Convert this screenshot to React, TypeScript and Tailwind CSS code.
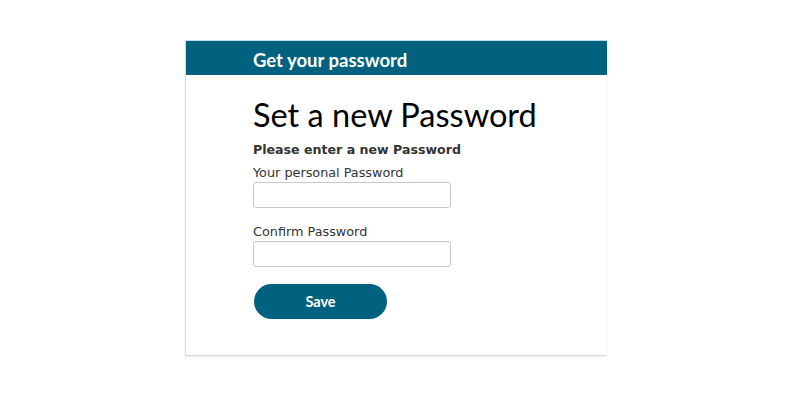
export default function App() {
  return (
    <div className="min-h-[400px] w-[800px] bg-white pl-[185px] pt-[40px] font-['DejaVu_Sans',Verdana,sans-serif]">
      <div className="w-[422px] border-l border-b border-[#d8d8d8] bg-white shadow-[0_1px_2px_rgba(0,0,0,0.08)]">
        {/* Header */}
        <div className="flex h-[35px] items-center border-t border-[#bfe0ea] bg-[#00627f] pl-[67px] pt-[5px]">
          <h2 className="font-['Lato',sans-serif] text-[18.5px] font-bold text-white">Get your password</h2>
        </div>

        {/* Form */}
        <div className="pl-[67px] pt-[18px] pb-[36px]">
          <h1 className="font-['Lato',sans-serif] text-[32.5px] leading-[44px] text-black">Set a new Password</h1>
          <p className="mt-[4px] text-[12.6px] font-bold leading-[17px] text-[#333]">Please enter a new Password</p>

          <label className="mt-[6px] block text-[12.8px] leading-[17px] text-[#333]">Your personal Password</label>
          <input
            type="password"
            className="mt-[1px] block h-[26px] w-[198px] rounded-[3px] border border-[#c8c8c8] bg-white px-2 text-[13px] outline-none"
          />

          <label className="mt-[15px] block text-[12.8px] leading-[17px] text-[#333]">Confirm Password</label>
          <input
            type="password"
            className="mt-[1px] block h-[26px] w-[198px] rounded-[3px] border border-[#c8c8c8] bg-white px-2 text-[13px] outline-none"
          />

          <button className="mt-[17px] ml-px h-[35px] w-[133px] rounded-full bg-[#00627f] font-['Lato',sans-serif] text-[14.5px] font-bold text-white">
            Save
          </button>
        </div>
      </div>
    </div>
  )
}
